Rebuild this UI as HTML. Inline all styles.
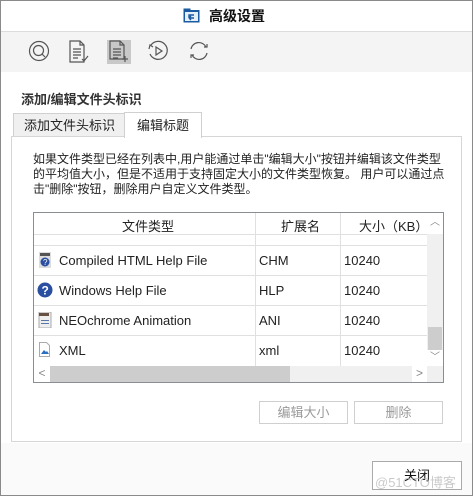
<!DOCTYPE html>
<html><head><meta charset="utf-8"><style>
*{margin:0;padding:0;box-sizing:border-box}
body{width:473px;height:496px;position:relative;background:#fff;font-family:"Liberation Sans","Noto Sans CJK SC",sans-serif;font-size:13px;color:#222;overflow:hidden}
.a{position:absolute}
.win{left:0;top:0;width:473px;height:496px;border:1px solid #8a8a8a}
.cell{position:absolute;font-size:13px;color:#222;white-space:nowrap}
.btn{position:absolute;border:1px solid #cfcfcf;background:#fff;color:#9a9a9a;font-size:13px;text-align:center;line-height:21px}
</style></head><body>
<div class="a win"></div>
<svg class="a" style="left:183px;top:8px" width="17" height="15" viewBox="0 0 17 15"><rect x="0.5" y="2" width="16" height="12.5" fill="#1a5aa0"/><rect x="0.5" y="0.5" width="7" height="3" fill="#1a5aa0"/><rect x="2" y="4" width="13" height="9" fill="#e6eef8"/><path d="M11 10H6M6 10l2-2M6 10l2 2M6 10V7h5" stroke="#1a5aa0" stroke-width="1.4" fill="none"/></svg>
<div class="a" style="left:209px;top:6px;font-size:14px;font-weight:bold;color:#111">高级设置</div>
<div class="a" style="left:1px;top:31px;width:471px;height:1px;background:#dcdcdc"></div>
<div class="a" style="left:1px;top:32px;width:471px;height:40px;background:#f4f4f4"></div>
<svg class="a" style="left:28px;top:40px" width="22" height="22" viewBox="0 0 22 22" fill="none" stroke="#555" stroke-width="1.2"><circle cx="11" cy="11" r="9.5"/><circle cx="10.5" cy="10.5" r="5"/><path d="M14 14l3 3"/></svg>
<svg class="a" style="left:68px;top:40px" width="22" height="24" viewBox="0 0 22 24" fill="none" stroke="#555" stroke-width="1.2"><path d="M2 1h10l4 4v17H2z M12 1v4h4"/><path d="M5 9h8M5 12h8M5 15h8M5 18h5"/><path d="M14 19l2 2 4-5"/></svg>
<div class="a" style="left:107px;top:40px;width:24px;height:24px;background:#c8c8c8"></div>
<svg class="a" style="left:108px;top:40px" width="22" height="24" viewBox="0 0 22 24" fill="none" stroke="#555" stroke-width="1.2"><path d="M2 1h10l4 4v14H2z M12 1v4h4"/><path d="M5 9h8M5 12h8M5 15h8M5 18h5"/><path d="M17 16v6M14 19h6"/></svg>
<svg class="a" style="left:147px;top:40px" width="22" height="22" viewBox="0 0 22 22" fill="none" stroke="#555" stroke-width="1.2"><path d="M4 5A9 9 0 1 1 3 14"/><path d="M2 9l1-4 3 2"/><path d="M9 7v8l6-4z"/></svg>
<svg class="a" style="left:187px;top:40px" width="24" height="22" viewBox="0 0 24 22" fill="none" stroke="#555" stroke-width="1.2"><path d="M4 9A8 8 0 0 1 19 7M20 13A8 8 0 0 1 5 15"/><path d="M17 7h3V4M7 15H4v3"/></svg>
<div class="a" style="left:21px;top:89px;font-size:13px;font-weight:bold;color:#333">添加/编辑文件头标识</div>
<div class="a" style="left:13px;top:113px;width:112px;height:24px;background:#f0f0f0;border:1px solid #d0d0d0;border-bottom:none;padding-left:10px;line-height:24px;font-size:13px">添加文件头标识</div>
<div class="a" style="left:11px;top:136px;width:451px;height:306px;border:1px solid #d6d6d6;background:#fff"></div>
<div class="a" style="left:124px;top:112px;width:78px;height:26px;background:#fff;border:1px solid #d0d0d0;border-bottom:none;text-align:center;line-height:25px;font-size:13px">编辑标题</div>
<div class="a" style="left:33px;top:152px;font-size:12px;line-height:15px;white-space:nowrap;color:#222">如果文件类型已经在列表中,用户能通过单击"编辑大小"按钮并编辑该文件类型<br>的平均值大小，但是不适用于支持固定大小的文件类型恢复。 用户可以通过点<br>击"删除"按钮，删除用户自定义文件类型。</div>
<div class="a" style="left:33px;top:212px;width:411px;height:171px;border:1px solid #8a8e94;background:#fff;overflow:hidden">
 <div class="a" style="left:0;top:0;width:393px;height:22px;border-bottom:1px solid #e0e0e0"></div>
 <div class="cell" style="left:88px;top:3px">文件类型</div>
 <div class="cell" style="left:247px;top:3px">扩展名</div>
 <div class="cell" style="left:325px;top:3px">大小（KB）</div>
 <div class="a" style="left:221px;top:0;width:1px;height:153px;background:#e0e0e0"></div>
 <div class="a" style="left:306px;top:0;width:1px;height:153px;background:#e0e0e0"></div>
 <div class="a" style="left:0;top:32px;width:393px;height:1px;background:#e0e0e0"></div>
 <div class="a" style="left:0;top:62px;width:393px;height:1px;background:#e0e0e0"></div>
 <div class="a" style="left:0;top:92px;width:393px;height:1px;background:#e0e0e0"></div>
 <div class="a" style="left:0;top:122px;width:393px;height:1px;background:#e0e0e0"></div>
 <svg class="a" style="left:4px;top:39px" width="14" height="16"><rect x="1" y="0" width="12" height="16" fill="#ddd"/><rect x="2" y="1" width="10" height="3" fill="#555"/><circle cx="7" cy="10" r="4.5" fill="#2a4fa0"/><text x="5" y="13" font-size="8" fill="#fff" font-family="Liberation Sans">?</text></svg>
 <div class="cell" style="left:25px;top:40px">Compiled HTML Help File</div><div class="cell" style="left:225px;top:40px">CHM</div><div class="cell" style="left:310px;top:40px">10240</div>
 <svg class="a" style="left:3px;top:69px" width="16" height="16"><circle cx="8" cy="8" r="7.5" fill="#2a4fa0"/><text x="4.5" y="12.5" font-size="12" font-weight="bold" fill="#fff" font-family="Liberation Sans">?</text></svg>
 <div class="cell" style="left:25px;top:70px">Windows Help File</div><div class="cell" style="left:225px;top:70px">HLP</div><div class="cell" style="left:310px;top:70px">10240</div>
 <svg class="a" style="left:4px;top:99px" width="14" height="16"><rect x="1" y="0" width="12" height="16" fill="#eee" stroke="#aaa"/><rect x="1" y="1" width="10" height="3" fill="#6a5040"/><rect x="3" y="8" width="8" height="1" fill="#5577aa"/><rect x="3" y="11" width="8" height="1" fill="#5577aa"/></svg>
 <div class="cell" style="left:25px;top:100px">NEOchrome Animation</div><div class="cell" style="left:225px;top:100px">ANI</div><div class="cell" style="left:310px;top:100px">10240</div>
 <svg class="a" style="left:5px;top:129px" width="12" height="15"><path d="M.5 .5h7l3 3v11H.5z" fill="#fff" stroke="#aaa"/><path d="M2 12l3-4 2 2 1-1 2 3z" fill="#2a6fc0"/></svg>
 <div class="cell" style="left:25px;top:130px">XML</div><div class="cell" style="left:225px;top:130px">xml</div><div class="cell" style="left:310px;top:130px">10240</div>
 <div class="a" style="left:393px;top:0;width:16px;height:153px;background:#f0f0f0"></div>
 <div class="a" style="left:393px;top:0;width:16px;height:21px;background:#fff;color:#888;font-size:10px;text-align:center;line-height:20px">︿</div>
 <div class="a" style="left:394px;top:114px;width:14px;height:23px;background:#cdcdcd"></div>
 <div class="a" style="left:393px;top:137px;width:16px;height:16px;background:#fff;color:#888;font-size:10px;text-align:center;line-height:16px">﹀</div>
 <div class="a" style="left:0;top:153px;width:393px;height:16px;background:#f0f0f0"></div>
 <div class="a" style="left:0;top:153px;width:16px;height:16px;background:#fff;color:#888;font-size:12px;text-align:center;line-height:15px">&lt;</div>
 <div class="a" style="left:16px;top:153px;width:240px;height:16px;background:#cdcdcd"></div>
 <div class="a" style="left:378px;top:153px;width:15px;height:16px;background:#fff;color:#888;font-size:12px;text-align:center;line-height:15px">&gt;</div>
 <div class="a" style="left:393px;top:153px;width:16px;height:16px;background:#f0f0f0"></div>
</div>
<div class="btn" style="left:259px;top:401px;width:89px;height:23px">编辑大小</div>
<div class="btn" style="left:354px;top:401px;width:89px;height:23px">删除</div>
<div class="a" style="left:1px;top:443px;width:471px;height:52px;background:#fafafa"></div>
<div class="btn" style="left:372px;top:461px;width:90px;height:29px;border-color:#aaa;color:#111;line-height:27px">关闭</div>
<div class="a" style="left:375px;top:472px;font-size:13px;color:rgba(180,180,180,0.7);white-space:nowrap">@51CTO博客</div>
</body></html>
